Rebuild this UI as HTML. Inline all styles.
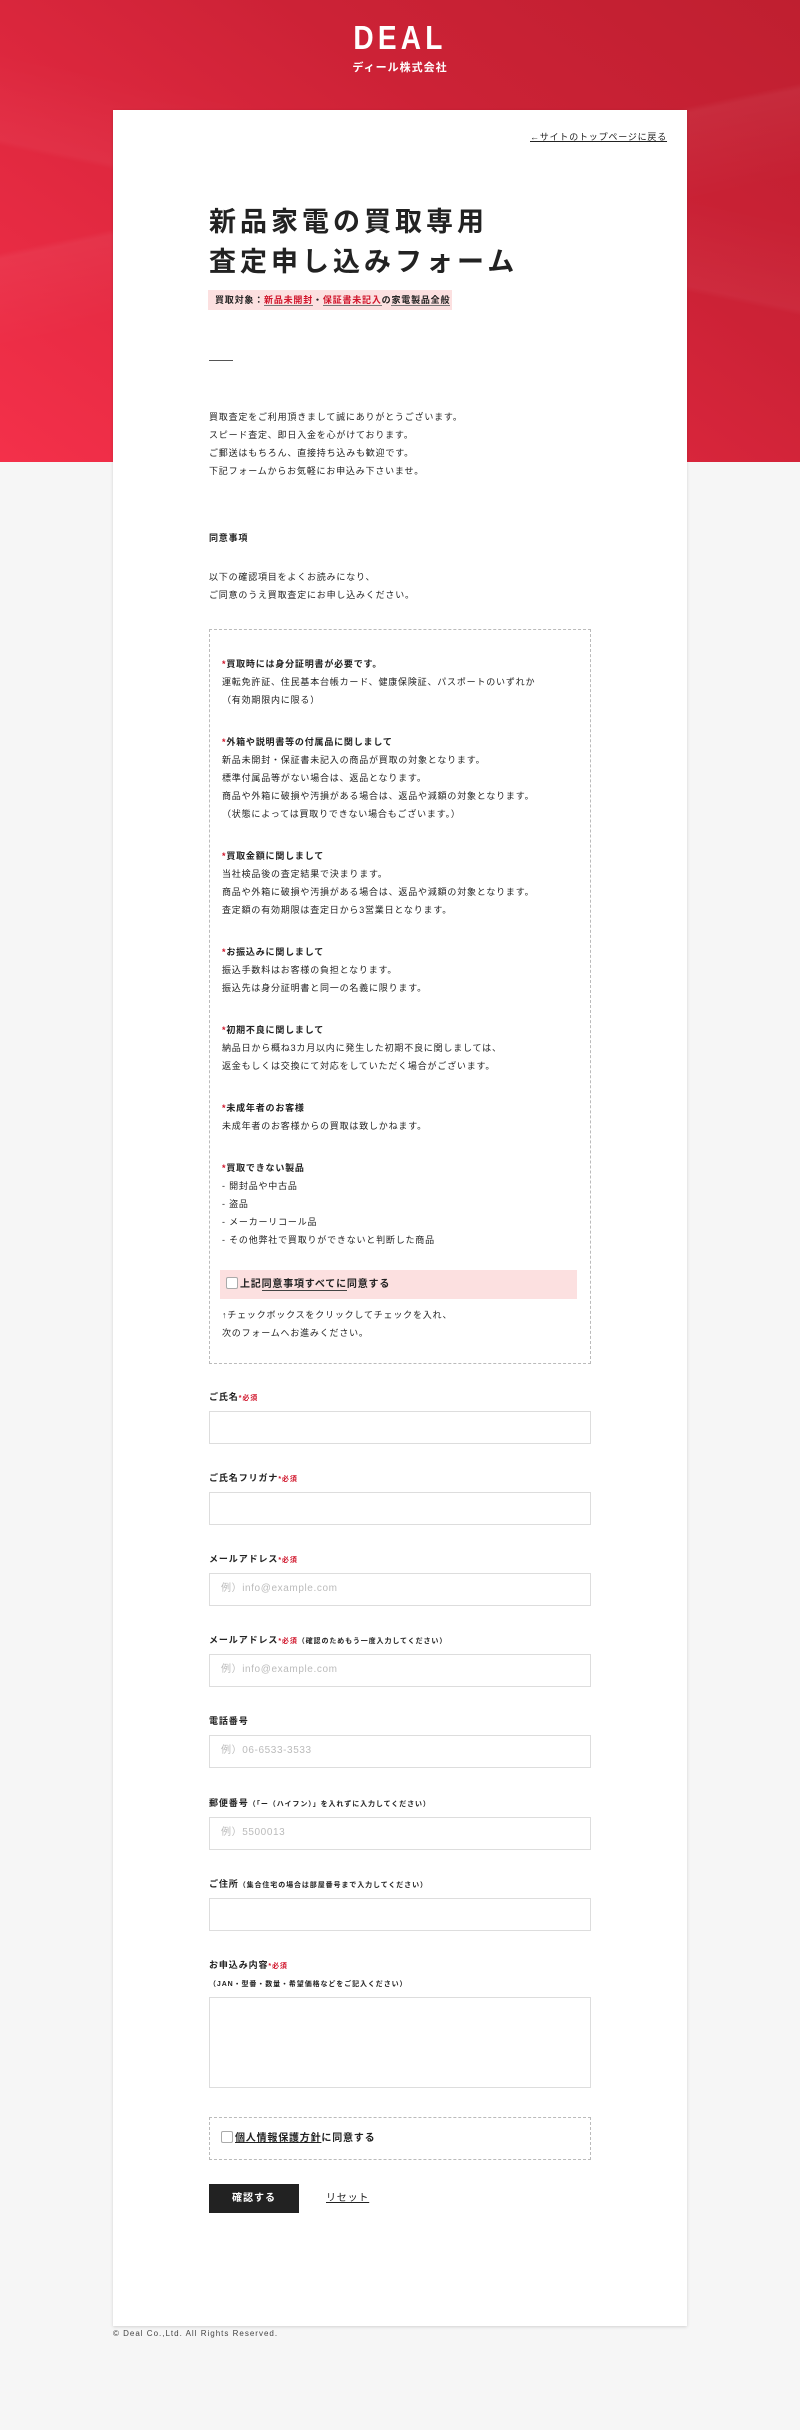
<!DOCTYPE html>
<html><head><meta charset="utf-8">
<style>
*{margin:0;padding:0;box-sizing:border-box}
html,body{width:800px;height:2430px;overflow:hidden}
body{background:#f6f6f6;position:relative;font-family:"Liberation Sans","Noto Sans CJK JP",sans-serif;color:#222}
.hdr{position:absolute;left:0;top:0;width:800px;height:462px;
background:
linear-gradient(168deg,rgba(255,255,255,0) 40%,rgba(255,255,255,.05) 41%,rgba(255,255,255,0) 55%),
linear-gradient(12deg,rgba(0,0,0,0) 50%,rgba(255,255,255,.04) 51%,rgba(0,0,0,0) 65%),
linear-gradient(35deg,#f4304a 0%,#e0283f 35%,#cc2236 65%,#bf1f30 100%)}
.logo{position:absolute;left:0;width:800px;top:20px;text-align:center;color:#fff;font-weight:bold;font-size:33px;letter-spacing:5px;line-height:36px;transform:scaleX(.85)}
.sub{position:absolute;left:0;width:800px;top:59px;text-align:center;color:#fff;font-weight:bold;font-size:11px;letter-spacing:1px}
.card{position:absolute;left:113px;top:110px;width:574px;height:2216px;background:#fff;box-shadow:0 1px 3px rgba(0,0,0,.15)}
.t{position:absolute;font-size:9px;letter-spacing:.8px;line-height:18px;white-space:nowrap}
.b{font-weight:bold}
.title{position:absolute;left:209px;top:202px;font-size:27px;font-weight:bold;letter-spacing:4px;line-height:40px;color:#222}
.badge{position:absolute;left:208px;top:290px;height:20px;width:244px;background:#fce0e0;font-size:9px;font-weight:bold;letter-spacing:.8px;line-height:20px;padding-left:7px;white-space:nowrap}
.badge u{text-decoration:none;border-bottom:1.5px solid #777}
.red{color:#d0142a}
.box{position:absolute;left:209px;top:629px;width:382px;height:735px;border:1px dashed #bbb;padding:25px 12px 0 12px;font-size:9px;letter-spacing:.8px;line-height:18px}
.box .s{margin-bottom:24px;white-space:nowrap}
.box .s .h{font-weight:bold}
.box .s .h:before{content:"*";color:#d0142a}
.pink{height:29px;background:#fce0e0;margin-top:21px;margin-left:-2px;width:357px;font-weight:bold;font-size:10px;line-height:29px;padding-left:6px}
.cb{display:inline-block;width:12px;height:12px;border:1px solid #aaa;background:#fff;border-radius:2px;vertical-align:-2px;margin-right:2px}
.pink u{text-decoration:none;border-bottom:1px solid #444}
.lab{position:absolute;left:209px;font-size:9px;font-weight:bold;letter-spacing:.9px;line-height:14px;white-space:nowrap}
.lab .r{color:#d0142a;font-size:7px}
.lab .n{font-size:7px}
.in{position:absolute;left:209px;width:382px;height:33px;border:1.5px solid #ddd;background:#fff;font-size:10px;color:#bbb;line-height:30px;padding-left:11px;letter-spacing:.6px}
</style></head><body>
<div class="hdr"></div>
<div class="logo">DEAL</div>
<div class="sub">ディール株式会社</div>
<div class="card"></div>

<div class="t" style="left:530px;top:128px;text-decoration:underline">←サイトのトップページに戻る</div>
<div class="title">新品家電の買取専用<br>査定申し込みフォーム</div>
<div class="badge">買取対象：<u class="red">新品未開封</u>・<u class="red">保証書未記入</u>の<u>家電製品全般</u></div>
<div style="position:absolute;left:209px;top:360px;width:24px;height:1px;background:#555"></div>

<div class="t" style="left:209px;top:408px">買取査定をご利用頂きまして誠にありがとうございます。<br>スピード査定、即日入金を心がけております。<br>ご郵送はもちろん、直接持ち込みも歓迎です。<br>下記フォームからお気軽にお申込み下さいませ。</div>
<div class="t b" style="left:209px;top:529px">同意事項</div>
<div class="t" style="left:209px;top:568px">以下の確認項目をよくお読みになり、<br>ご同意のうえ買取査定にお申し込みください。</div>

<div class="box">
<div class="s"><div class="h">買取時には身分証明書が必要です。</div>運転免許証、住民基本台帳カード、健康保険証、パスポートのいずれか<br>（有効期限内に限る）</div>
<div class="s"><div class="h">外箱や説明書等の付属品に関しまして</div>新品未開封・保証書未記入の商品が買取の対象となります。<br>標準付属品等がない場合は、返品となります。<br>商品や外箱に破損や汚損がある場合は、返品や減額の対象となります。<br>（状態によっては買取りできない場合もございます。）</div>
<div class="s"><div class="h">買取金額に関しまして</div>当社検品後の査定結果で決まります。<br>商品や外箱に破損や汚損がある場合は、返品や減額の対象となります。<br>査定額の有効期限は査定日から3営業日となります。</div>
<div class="s"><div class="h">お振込みに関しまして</div>振込手数料はお客様の負担となります。<br>振込先は身分証明書と同一の名義に限ります。</div>
<div class="s"><div class="h">初期不良に関しまして</div>納品日から概ね3カ月以内に発生した初期不良に関しましては、<br>返金もしくは交換にて対応をしていただく場合がございます。</div>
<div class="s"><div class="h">未成年者のお客様</div>未成年者のお客様からの買取は致しかねます。</div>
<div class="s" style="margin-bottom:0"><div class="h">買取できない製品</div>- 開封品や中古品<br>- 盗品<br>- メーカーリコール品<br>- その他弊社で買取りができないと判断した商品</div>
<div class="pink"><span class="cb"></span>上記<u>同意事項すべてに</u>同意する</div>
<div style="margin-top:7px;white-space:nowrap">↑チェックボックスをクリックしてチェックを入れ、<br>次のフォームへお進みください。</div>
</div>

<div class="lab" style="top:1390px">ご氏名<span class="r">*必須</span></div>
<div class="in" style="top:1411px"></div>
<div class="lab" style="top:1471px">ご氏名フリガナ<span class="r">*必須</span></div>
<div class="in" style="top:1492px"></div>
<div class="lab" style="top:1552px">メールアドレス<span class="r">*必須</span></div>
<div class="in" style="top:1573px">例）info@example.com</div>
<div class="lab" style="top:1633px">メールアドレス<span class="r">*必須</span><span class="n">（確認のためもう一度入力してください）</span></div>
<div class="in" style="top:1654px">例）info@example.com</div>
<div class="lab" style="top:1714px">電話番号</div>
<div class="in" style="top:1735px">例）06-6533-3533</div>
<div class="lab" style="top:1796px">郵便番号<span class="n">（「ー（ハイフン）」を入れずに入力してください）</span></div>
<div class="in" style="top:1817px">例）5500013</div>
<div class="lab" style="top:1877px">ご住所<span class="n">（集合住宅の場合は部屋番号まで入力してください）</span></div>
<div class="in" style="top:1898px"></div>
<div class="lab" style="top:1958px">お申込み内容<span class="r">*必須</span></div>
<div class="lab" style="top:1976px"><span class="n">（JAN・型番・数量・希望価格などをご記入ください）</span></div>
<div class="in" style="top:1997px;height:91px"></div>

<div style="position:absolute;left:209px;top:2117px;width:382px;height:43px;border:1px dashed #bbb"></div>
<div class="t b" style="left:221px;top:2130px;font-size:10px"><span class="cb"></span><u>個人情報保護方針</u>に同意する</div>

<div style="position:absolute;left:209px;top:2184px;width:90px;height:29px;background:#222;color:#fff;font-size:10px;font-weight:bold;letter-spacing:1px;text-align:center;line-height:29px">確認する</div>
<div class="t" style="left:326px;top:2190px;font-size:10px;text-decoration:underline">リセット</div>

<div class="t" style="left:113px;top:2325px;font-size:8px;color:#444;letter-spacing:1px">© Deal Co.,Ltd. All Rights Reserved.</div>
</body></html>
